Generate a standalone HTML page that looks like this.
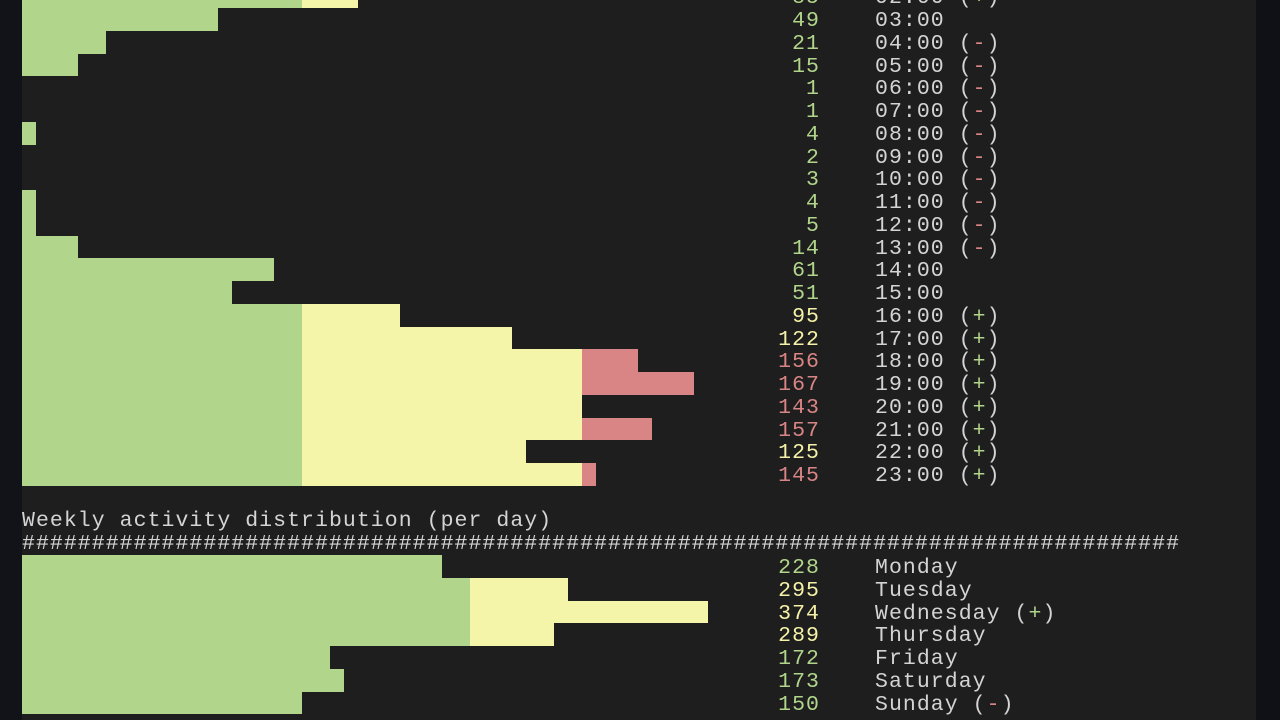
<!DOCTYPE html>
<html><head><meta charset="utf-8"><style>
html,body{margin:0;padding:0;width:1280px;height:720px;overflow:hidden;background:#1e1e1e}
#l{position:absolute;left:0;top:0;width:22px;height:720px;background:#111318}
#r{position:absolute;left:1256px;top:0;width:24px;height:720px;background:#0f1116}
.t{position:absolute;font-family:"Liberation Mono",monospace;font-size:21.5px;letter-spacing:1.05px;white-space:pre;line-height:22.75px;height:22.75px;color:#d4d4d4}
.n{text-align:right;width:100px;left:720px}
.b{position:absolute}
.g{color:#b1d58b}.y{color:#f5f2a8}.rd{color:#d98585}
</style></head><body>
<div id="l"></div><div id="r"></div>
<script>
var hours=[[85,"02:00","+",358],[49,"03:00","",218],[21,"04:00","-",106],[15,"05:00","-",78],[1,"06:00","-",22],[1,"07:00","-",22],[4,"08:00","-",36],[2,"09:00","-",22],[3,"10:00","-",22],[4,"11:00","-",36],[5,"12:00","-",36],[14,"13:00","-",78],[61,"14:00","",274],[51,"15:00","",232],[95,"16:00","+",400],[122,"17:00","+",512],[156,"18:00","+",638],[167,"19:00","+",694],[143,"20:00","+",582],[157,"21:00","+",652],[125,"22:00","+",526],[145,"23:00","+",596]];
var h="";
function bar(top,hgt,w){
 var segs=[[0,280,"#b1d58b"],[280,560,"#f5f5a9"],[560,9999,"#d98585"]];
 segs.forEach(function(s){var a=s[0],b=Math.min(s[1],w);if(b>a)h+='<div class="b" style="left:'+(22+a)+'px;top:'+top+'px;width:'+(b-a)+'px;height:'+hgt+'px;background:'+s[2]+'"></div>';});
}
hours.forEach(function(r,i){
 var top=8+22.75*(i-1);var n=r[0];var w=r[3]-22;
 bar(Math.round(top),Math.round(top+22.75)-Math.round(top),w);
 var c=n>=140?"rd":(n>=90?"y":"g");
 var tt=top+2;
 h+='<div class="t n '+c+'" style="top:'+tt+'px">'+n+'</div>';
 var s=r[2]?' (<span class="'+(r[2]=="+"?"g":"rd")+'">'+r[2]+'</span>)':'';
 h+='<div class="t" style="left:875px;top:'+tt+'px">'+r[1]+s+'</div>';
});
h+='<div class="t" style="left:22px;top:510px">Weekly activity distribution (per day)</div>';
h+='<div class="t" style="left:22px;top:533px">'+"#".repeat(83)+'</div>';
var days=[[228,"Monday","",442],[295,"Tuesday","",568],[374,"Wednesday","+",708],[289,"Thursday","",554],[172,"Friday","",330],[173,"Saturday","",344],[150,"Sunday","-",302]];
days.forEach(function(r,i){
 var top=555+22.75*i;var n=r[0];var w=r[3]-22;
 var t=Math.round(top),bt=Math.round(top+22.75);
 var gw=Math.min(w,448);
 h+='<div class="b" style="left:22px;top:'+t+'px;width:'+gw+'px;height:'+(bt-t)+'px;background:#b1d58b"></div>';
 if(w>448)h+='<div class="b" style="left:470px;top:'+t+'px;width:'+(w-448)+'px;height:'+(bt-t)+'px;background:#f5f5a9"></div>';
 var c=n>=240?"y":"g";
 var tt=top+2;
 h+='<div class="t n '+c+'" style="top:'+tt+'px">'+n+'</div>';
 var s=r[2]?' (<span class="'+(r[2]=="+"?"g":"rd")+'">'+r[2]+'</span>)':'';
 h+='<div class="t" style="left:875px;top:'+tt+'px">'+r[1]+s+'</div>';
});
document.body.insertAdjacentHTML("beforeend",h);
</script>
</body></html>
